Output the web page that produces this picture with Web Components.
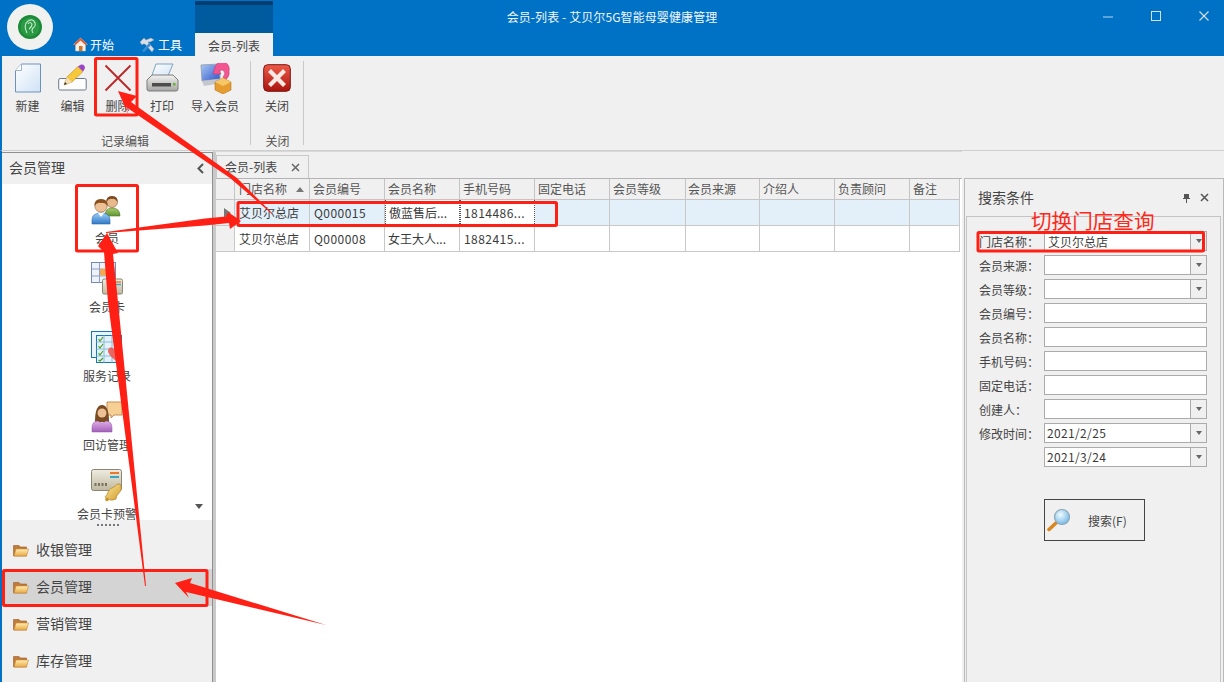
<!DOCTYPE html>
<html lang="zh"><head><meta charset="utf-8"><title>会员-列表</title>
<style>
html,body{margin:0;padding:0;background:#f0f0f0}
body{width:1224px;height:682px;overflow:hidden;position:relative;font:12px "Noto Sans CJK SC","Noto Sans",sans-serif;color:#444}
app-main{flex:1}
#shell{display:flex;flex-direction:column;width:1224px;height:682px}
#defs{position:absolute;width:0;height:0}
</style></head><body>
<svg id="defs" aria-hidden="true"><defs>
<linearGradient id="gPage" x1="0" y1="0" x2="1" y2="1"><stop offset="0" stop-color="#fff"/><stop offset="1" stop-color="#cfe2f5"/></linearGradient>
<linearGradient id="gBlue" x1="0" y1="0" x2="0" y2="1"><stop offset="0" stop-color="#9fd0f5"/><stop offset="1" stop-color="#2f78c8"/></linearGradient>
<linearGradient id="gGreen" x1="0" y1="0" x2="0" y2="1"><stop offset="0" stop-color="#a9cc6e"/><stop offset="1" stop-color="#5f9433"/></linearGradient>
<linearGradient id="gPurple" x1="0" y1="0" x2="0" y2="1"><stop offset="0" stop-color="#e2aee8"/><stop offset="1" stop-color="#a160b8"/></linearGradient>
<linearGradient id="gRed" x1="0" y1="0" x2="0" y2="1"><stop offset="0" stop-color="#ee5a48"/><stop offset="1" stop-color="#a8140e"/></linearGradient>
<linearGradient id="gGrey" x1="0" y1="0" x2="0" y2="1"><stop offset="0" stop-color="#f2f2f0"/><stop offset="1" stop-color="#a5a5a3"/></linearGradient>
<linearGradient id="gCard" x1="0" y1="0" x2="0" y2="1"><stop offset="0" stop-color="#efece0"/><stop offset="1" stop-color="#c0b9a0"/></linearGradient>
<linearGradient id="gGold" x1="0" y1="0" x2="1" y2="1"><stop offset="0" stop-color="#fdeb9a"/><stop offset="1" stop-color="#d19a2c"/></linearGradient>
<linearGradient id="gScreen" x1="0" y1="0" x2="1" y2="1"><stop offset="0" stop-color="#a9c8f5"/><stop offset="1" stop-color="#2f55c9"/></linearGradient>
</defs></svg>

<div id="shell">
<app-titlebar title-text="会员-列表 - 艾贝尔5G智能母婴健康管理"></app-titlebar>

<app-ribbon>
  <ribbon-group label="记录编辑" style="width:246px">
    <ribbon-btn label="新建" w="45"><svg width="28" height="30" viewBox="0 0 28 30"><path d="M7.5 1H26.5V29H1.5V7.500Z" fill="url(#gPage)" stroke="#6e93bb"/><path d="M7.500 1V7.500H1.500" fill="#fff" stroke="#9ab4cf"/></svg></ribbon-btn>
    <ribbon-btn label="编辑" w="45"><svg width="29" height="28" viewBox="0 0 29 28"><rect x=".7" y="14.500" width="27.500" height="11.500" rx="1.500" fill="#fdfdfd" stroke="#6b7a8a"/><path d="M6 21 9 13 20 2.500 25 7.500 14 18Z" fill="#f6c83a" stroke="#b98a1e" stroke-width=".6"/><path d="M20 2.500 22.500 .8 Q25 0 26.500 2 27.500 4 26.500 5.200L25 7.500Z" fill="#9a45c8"/><path d="M6 21 9 13 14 18Z" fill="#f3dcb4"/><path d="M6 21 7 18 9 20Z" fill="#333"/></svg></ribbon-btn>
    <ribbon-btn label="删除" w="45"><svg width="28" height="28" viewBox="0 0 28 28"><path d="M1.500 1.500 26.500 26.500M26.500 1.500 1.500 26.500" stroke="#b82a2a" stroke-width="1.900" fill="none"/></svg></ribbon-btn>
    <ribbon-btn label="打印" w="44"><svg width="33" height="30" viewBox="0 0 33 30"><path d="M10 1H27L21 15H5Z" fill="url(#gPage)" stroke="#7fa3c4"/><path d="M1 17 6 12H27L32 17V26Q32 28 30 28H3Q1 28 1 26Z" fill="url(#gGrey)" stroke="#7d7d7d"/><rect x="6" y="20" width="19" height="3.500" fill="#4d4d4d"/><rect x="27" y="20" width="2.500" height="2.500" fill="#66b32e"/></svg></ribbon-btn>
    <ribbon-btn label="导入会员" w="62"><svg width="33" height="31" viewBox="0 0 33 31"><path d="M2 2 21 1V16L3 18Z" fill="url(#gScreen)" stroke="#9aa6b6"/><path d="M3 18 21 16 23 20 5 23Z" fill="#c4c7cd"/><path d="M16 4A7 7 0 0 1 30 8Q31 14 26 17L24 14Q27 11 25 8 23 6 20 8L22 11 14 11Z" fill="#f2558f" stroke="#c12e6a" stroke-width=".5"/><path d="M16 19 24 15 32 19V27L24 31 16 27Z" fill="#e69c2f" stroke="#a86a16" stroke-width=".5"/><path d="M16 19 24 23 32 19 24 15Z" fill="#f6c766"/></svg></ribbon-btn>
  </ribbon-group>
  <ribbon-group label="关闭" style="width:53px">
    <ribbon-btn label="关闭" w="52"><svg width="28" height="28" viewBox="0 0 28 28"><rect x=".7" y=".7" width="26.600" height="26.600" rx="4" fill="url(#gRed)" stroke="#7e1410"/><path d="M8 5 14 11 20 5 23 8 17 14 23 20 20 23 14 17 8 23 5 20 11 14 5 8Z" fill="#fbe9e4"/></svg></ribbon-btn>
  </ribbon-group>
</app-ribbon>

<app-main>
  <nav-panel slot="nav" title-text="会员管理">
    <nav-tool label="会员"><svg width="32" height="30" viewBox="0 0 32 30"><circle cx="21" cy="7" r="5.500" fill="#e8b98c" stroke="#7a4a22" stroke-width=".5"/><path d="M15.500 7Q15 1 21 1 27 1 26.500 7 24 3 21 4 18 3 15.500 7Z" fill="#7b4a1f"/><path d="M14 21Q14 13 21 13 29 13 29 21Z" fill="url(#gGreen)" stroke="#4f7a2a" stroke-width=".6"/><circle cx="10" cy="11" r="6.200" fill="#eec096" stroke="#7a4a22" stroke-width=".5"/><path d="M3.500 11Q3 4 10 4 17 4 16.500 11 14 7 10 8 6 7 3.500 11Z" fill="#8a4f1c"/><path d="M1 29V25Q1 18 10 18 19 18 19 25V29Z" fill="url(#gBlue)" stroke="#2c66ad" stroke-width=".6"/><path d="M7 18 10 22 13 18Z" fill="#fff"/></svg></nav-tool>
    <nav-tool label="会员卡"><svg width="32" height="33" viewBox="0 0 32 33"><rect x=".5" y=".5" width="24" height="20" fill="#eef2fa" stroke="#7389b7"/><path d="M.5 7H24.500M.5 14H24.500M8.500 .5V20.500M16.500 .5V20.500" stroke="#8ea0c6" fill="none"/><rect x="9" y="7" width="7" height="6.500" fill="#f3a84f"/><rect x="11.500" y="17" width="20" height="15" rx="1.500" fill="url(#gCard)" stroke="#8b8572"/><path d="M24 20H30" stroke="#e9792c" stroke-width="1.400"/><path d="M24 22.500H30" stroke="#3ba7bf" stroke-width="1.400"/></svg></nav-tool>
    <nav-tool label="服务记录"><svg width="32" height="33" viewBox="0 0 32 33"><rect x=".5" y=".5" width="24" height="26" fill="#eaf3fb" stroke="#1478b4"/><rect x="5.500" y="4.500" width="25" height="27" fill="#e2f1fa" stroke="#1478b4"/><path d="M5.500 11H30.500M5.500 18H30.500M5.500 25H30.500M13 4.500V31.500M21 4.500V31.500" stroke="#8cbcd8" fill="none"/><path d="M7.500 8 9 10 12 6M7.500 15 9 17 12 13M7.500 22 9 24 12 20M7.500 29 9 30 12 27" stroke="#4c9a12" stroke-width="1.100" fill="none"/><path d="M25 30Q16 23 17 19 19 14 23 18 27 14 30 18 32 23 25 30Z" fill="#ec5a52" opacity=".9"/></svg></nav-tool>
    <nav-tool label="回访管理"><svg width="32" height="32" viewBox="0 0 32 32"><path d="M16 1H31V14H23L20 17V14H16Z" fill="#f5cf94" stroke="#c38d55"/><path d="M4 21Q4 4 11 4 18 4 18 21Z" fill="#7a4a20"/><circle cx="11" cy="12" r="4.500" fill="#eec096"/><path d="M1 31V27Q1 20 7 20 11 24 15 20 21 20 21 27V31Z" fill="url(#gPurple)" stroke="#8f53a6" stroke-width=".5"/></svg></nav-tool>
    <nav-tool label="会员卡预警"><svg width="32" height="33" viewBox="0 0 32 33"><rect x=".5" y=".5" width="30" height="21" rx="2" fill="url(#gCard)" stroke="#8b8572"/><path d="M19 4H28" stroke="#e9792c" stroke-width="2"/><path d="M19 8H28" stroke="#3ba7bf" stroke-width="2"/><path d="M3.500 14h2v3h-2zM7 14h2v3H7zM10.500 14h2v3h-2zM14 14h2v3h-2z" fill="#77735f"/><path d="M29 15Q32 20 28 24 25 27 25 30 19 33 14 28 16 26 17 23 19 19 23 18 26 14 29 15Z" fill="url(#gGold)" stroke="#a8771c" stroke-width=".6"/><circle cx="16" cy="30.500" r="1.800" fill="#c9922a"/></svg></nav-tool>
    <nav-cat slot="cats" label="收银管理"></nav-cat>
    <nav-cat slot="cats" label="会员管理" selected></nav-cat>
    <nav-cat slot="cats" label="营销管理"></nav-cat>
    <nav-cat slot="cats" label="库存管理"></nav-cat>
  </nav-panel>
  <doc-area slot="doc"></doc-area>
  <search-panel slot="side">
    <search-field label="门店名称：" value="艾贝尔总店" combo></search-field>
    <search-field label="会员来源：" combo></search-field>
    <search-field label="会员等级：" combo></search-field>
    <search-field label="会员编号："></search-field>
    <search-field label="会员名称："></search-field>
    <search-field label="手机号码："></search-field>
    <search-field label="固定电话："></search-field>
    <search-field label="创建人：" combo></search-field>
    <search-field label="修改时间：" value="2021/2/25" combo></search-field>
    <search-field label="" value="2021/3/24" combo></search-field>
  </search-panel>
</app-main>
</div>
<app-annotations></app-annotations>

<script>
const FONT='"Noto Sans CJK SC","Noto Sans",sans-serif';
function def(name,css,html,init){
  customElements.define(name,class extends HTMLElement{
    connectedCallback(){
      if(this.shadowRoot)return;
      const r=this.attachShadow({mode:'open'});
      const h=typeof html==='function'?html(this):html;
      r.innerHTML='<style>'+css+'</style>'+h;
      if(init)init(this,r);
    }
  });
}

def('app-titlebar',`
:host{display:grid;grid-template-columns:1fr auto 1fr;height:56px;background:#0072c6;color:#fff;flex:none;font-family:${FONT}}
.left{display:flex;align-items:flex-end;min-width:0}
.logo{width:46px;height:46px;border-radius:50%;background:#f1f1ef;margin:0 0 6px 7px;display:flex;align-items:center;justify-content:center;flex:none;align-self:flex-end}
.tabs{display:flex;align-items:flex-end;height:56px}
.tab{display:flex;align-items:center;gap:2px;height:23px;color:#fff;font-size:12px}
.t1{margin-left:20px;width:67px;gap:2px}
.t2{width:55px;gap:1px}
.t2 svg{margin-right:1px}
.ctx{width:78px;height:55px;margin-top:1px;display:flex;flex-direction:column;align-self:flex-end}
.ctx i{display:block;height:4px;background:#003d70}
.ctx b{display:block;height:28px;background:#005a9e}
.ctx span{display:flex;flex:1;align-items:center;justify-content:center;background:#f0f0f0;color:#444;font-size:12px;font-weight:400;padding-top:1px}
.title{font-size:12px;align-self:start;padding-top:8px;line-height:18px;color:#f2f7fb;letter-spacing:.1px}
.win{display:flex;justify-content:flex-end}
.win svg{display:block}
`,el=>`
<div class="left">
 <div class="logo"><svg width="24" height="24" viewBox="0 0 24 24"><circle cx="12" cy="12" r="12" fill="#1c8a38"/><circle cx="12" cy="12" r="9.500" fill="#2a9a45"/><path d="M9 18Q5 10 10 6 15 3 17 8 18 11 15 13 13 15 15 18M10 9Q12 6 14 9 14 12 11 14" fill="none" stroke="#c5e8ca" stroke-width="1.100"/></svg></div>
 <div class="tabs">
  <div class="tab t1"><svg width="15" height="15" viewBox="0 0 15 15"><path d="M.5 7.500 7.500 1 14.500 7.500 12.500 7.500V14H2.500V7.500Z" fill="#f6f0e6" stroke="#c9b9a4" stroke-width=".5"/><path d="M.5 7.500 7.500 1 14.500 7.500 12.500 8 7.500 3.500 2.500 8Z" fill="#e2572b"/><rect x="6" y="9" width="3.500" height="5" fill="#c9752c"/></svg><span>开始</span></div>
  <div class="tab t2"><svg width="17" height="16" viewBox="0 0 17 16" style="margin-left:-1px"><path d="M1 5 5 1 7 3 12 1 15 3 11 5 9 5 15 12 13 15 6 7 4 7 3 8Z" fill="#d7dde4" stroke="#8a98a6" stroke-width=".5"/><path d="M3 14 10 6 12 8 5 15Z" fill="#3c8ed4"/></svg><span>工具</span></div>
  <div class="ctx"><i></i><b></b><span>会员-列表</span></div>
 </div>
</div>
<div class="title">${el.getAttribute('title-text')}</div>
<div class="win">
 <svg width="164" height="32" viewBox="0 0 164 32"><path d="M43 17H53" stroke="#b8d5ee" stroke-width="1"/><rect x="91.500" y="11.500" width="9" height="9" fill="none" stroke="#d5dfe8" stroke-width="1"/><path d="M139.500 11.500 148.500 20.500M148.500 11.500 139.500 20.500" stroke="#d5dfe8" stroke-width="1.100"/></svg>
</div>`);

def('app-ribbon',`
:host{display:flex;height:94px;background:#f0f0f0;border-left:2px solid #0072c6;border-bottom:1px solid #cfcfcf;flex:none;box-sizing:content-box;padding-left:3px}
`,`<slot></slot>`);

def('ribbon-group',`
:host{display:flex;flex-direction:column;height:94px;box-sizing:border-box;position:relative;flex:none}
.row{display:flex;height:78px}
.lab{height:16px;line-height:14px;text-align:center;color:#555;font-size:12px;width:100%}
:host([label="记录编辑"]) .lab{width:240px}
.sep{position:absolute;right:0;top:5px;height:84px;width:1px;background:#c9c9c9}
`,el=>`<div class="row"><slot></slot></div><div class="lab">${el.getAttribute('label')}</div><div class="sep"></div>`);

def('ribbon-btn',`
:host{display:flex;flex-direction:column;align-items:center;flex:none;font-size:12px;color:#444}
.ic{height:38px;display:flex;align-items:center;justify-content:center;margin-top:3px}
.lb{line-height:18px;white-space:nowrap}
::slotted(svg){display:block}
`,el=>{el.style.width=el.getAttribute('w')+'px';return `<div class="ic" part="ic"><slot></slot></div><div class="lb">${el.getAttribute('label')}</div>`});

def('app-main',`
:host{display:flex;min-height:0;flex:1;background:#f0f0f0;overflow:hidden}
`,`<slot name="nav"></slot><slot name="doc"></slot><slot name="side"></slot>`);

def('nav-panel',`
:host{display:flex;flex-direction:column;width:213px;flex:none;border-left:2px solid #0072c6;box-sizing:border-box;position:relative;background:#f0f0f0}
.wrap{margin-top:1px;flex:1;display:flex;flex-direction:column;border-top:1px solid #8f8f8f;border-right:1px solid #8f8f8f;min-height:0}
.hd{height:31px;flex:none;display:flex;align-items:center;justify-content:space-between;padding:0 7px;font-size:14px;color:#444}
.hd span{margin-bottom:4px}
.list{height:336px;flex:none;background:#fff;overflow:hidden;padding-top:6px;box-sizing:border-box;position:relative}
.arrow{position:absolute;right:9px;top:320px;width:0;height:0;border:4.500px solid transparent;border-top:5px solid #555;border-bottom:0}
.grip{height:12px;flex:none;display:flex;justify-content:center;align-items:flex-start;gap:1px;padding-top:4px;box-sizing:border-box}
.grip i{display:block;width:2px;height:2px;background:#777;margin-left:1px}
.cats{display:flex;flex-direction:column}
`,el=>`<div class="wrap"><div class="hd"><span>${el.getAttribute('title-text')}</span><svg width="9" height="11" viewBox="0 0 9 11"><path d="M7 1 2.500 5.500 7 10" fill="none" stroke="#555" stroke-width="2"/></svg></div>
<div class="list"><slot></slot><div class="arrow"></div></div>
<div class="grip"><i></i><i></i><i></i><i></i><i></i><i></i></div>
<div class="cats"><slot name="cats"></slot></div></div>`);

def('nav-tool',`
:host{display:flex;flex-direction:column;align-items:center;height:69px;font-size:12px;color:#444}
.ic{height:39px;display:flex;align-items:center;justify-content:center}
.lb{line-height:17px;white-space:nowrap}
::slotted(svg){display:block}
`,el=>`<div class="ic"><slot></slot></div><div class="lb">${el.getAttribute('label')}</div>`);

def('nav-cat',`
:host{display:flex;align-items:center;height:37px;font-size:14px;color:#444;padding-left:11px;gap:7px}
:host([selected]){background:#d4d4d4}
svg{display:block;flex:none;margin-bottom:1px}
span{margin-bottom:4px}
`,el=>`<svg width="16" height="13" viewBox="0 0 16 13"><defs><linearGradient id="f" x1="0" y1="0" x2="0" y2="1"><stop offset="0" stop-color="#fdeeb0"/><stop offset="1" stop-color="#eaa945"/></linearGradient></defs><path d="M.5 12V1.500H6L7.500 3H13.500V12Z" fill="#c07b3c" stroke="#9a5c26" stroke-width=".6"/><path d="M1 12 3 5H15.500L13.500 12Z" fill="url(#f)" stroke="#c98a35" stroke-width=".6"/></svg><span>${el.getAttribute('label')}</span>`);

const COLS=[19,75,75,75,75,75,76,74,75,75,50];
const HEAD=['门店名称','会员编号','会员名称','手机号码','固定电话','会员等级','会员来源','介绍人','负责顾问','备注'];
const ROWS=[['艾贝尔总店','Q000015','傲蓝售后...','1814486...','','','','','',''],['艾贝尔总店','Q000008','女王大人...','1882415...','','','','','','']];
def('doc-area',`
:host{display:flex;flex-direction:column;width:749px;flex:none;box-sizing:border-box;border-left:3px solid #c9c9c9;font-size:12px;color:#444;border-top:1px solid #d8d8d8}
.strip{height:26px;flex:none;display:flex;align-items:flex-end}
.tab{width:93px;height:23px;box-sizing:border-box;border:1px solid #c8c8c8;border-bottom:0;display:flex;align-items:center;justify-content:space-between;padding:0 8px;background:#f0f0f0}
.tab span{margin-bottom:2px}
.grid{flex:1;background:#fff;border-top:1px solid #b4b4b4;display:grid;grid-template-columns:${COLS.join('px ')}px;grid-auto-rows:min-content;align-content:start}
.c{box-sizing:border-box;border-right:1px solid #c8c8c8;border-bottom:1px solid #c8c8c8;padding-left:3px;white-space:nowrap;overflow:hidden;display:flex;align-items:center;color:#3b3b3b}
.first{padding-left:4px}
.h{height:21px;background:#f0f0f0;position:relative;color:#555;padding-bottom:2px;border-color:#c4c4c4}
.h.src{padding-left:2px}
.r{height:26px}
.rh{background:#f0f0f0;padding:0}
.sel{background:#e3f0fa}
.focus{background:#fff;border-right:1px dotted #555;border-left:1px dotted #555;padding-left:3px}
.sort{position:absolute;right:5px;top:8px;width:0;height:0;border:4px solid transparent;border-bottom:5px solid #777;border-top:0}
.tri{display:block;width:0;height:0;border:5.500px solid transparent;border-left:7px solid #777;border-right:0;margin-left:8px}
.num{letter-spacing:.45px;padding-left:4px}
.focus.num{padding-left:3px}
`,()=>{
 let g='<div class="c h"></div>';
 HEAD.forEach((t,i)=>g+=`<div class="c h${i==0?' first':''}${i==6?' src':''}">${t}${i==0?'<i class="sort"></i>':''}</div>`);
 ROWS.forEach((row,ri)=>{
  g+=`<div class="c r rh">${ri==0?'<i class="tri"></i>':''}</div>`;
  row.forEach((t,i)=>{
   let cl='c r';
   if(ri==0)cl+=(i==2||i==3)?' focus':' sel';
   if(i==0)cl+=' first';
   if(i==1||i==3)cl+=' num';
   g+=`<div class="${cl}">${t}</div>`;
  });
 });
 return `<div class="strip"><div class="tab"><span>会员-列表</span><svg width="9" height="9" viewBox="0 0 9 9"><path d="M1 1 8 8M8 1 1 8" stroke="#666" stroke-width="1.500"/></svg></div></div><div class="grid">${g}</div>`;
});

def('search-panel',`
:host{display:flex;flex-direction:column;width:260px;flex:none;margin:27px 0 0 2px;box-sizing:border-box;border:1px solid #b9b9b9;border-bottom:0;padding:0 2px 0 1px}
.hd{height:37px;flex:none;display:flex;align-items:center;padding:0 12px 0 12px;font-size:14px;color:#444}
.hd span{flex:1;margin-bottom:2px}
.hd svg{display:block;margin-left:9px}
.box{flex:1;border:1px solid #c4c4c4;border-bottom:0;padding:14px 0 0 13px;display:flex;flex-direction:column;gap:4px}
.btn{margin:28px 0 0 64px;width:101px;height:42px;box-sizing:border-box;border:1px solid #444;display:flex;align-items:center;font-size:12px;color:#444;padding-left:2px}
.btn span{margin-left:15px}
`,`<div class="hd"><span>搜索条件</span><svg width="9" height="10" viewBox="0 0 9 10"><path d="M2 1H7V5H8V6H5V10H4V6H1V5H2Z" fill="#555"/></svg><svg width="9" height="9" viewBox="0 0 9 9"><path d="M1 1 8 8M8 1 1 8" stroke="#555" stroke-width="1.500"/></svg></div>
<div class="box"><slot></slot>
<div class="btn"><svg width="26" height="24" viewBox="0 0 26 24"><defs><radialGradient id="l" cx=".4" cy=".35" r=".7"><stop offset="0" stop-color="#f2fbff"/><stop offset="1" stop-color="#6db6e6"/></radialGradient></defs><path d="M2 21.500 9 15" stroke="#d8861e" stroke-width="3.500" stroke-linecap="round"/><circle cx="15" cy="9" r="7.500" fill="url(#l)" stroke="#8fa6b5" stroke-width="1.200"/></svg><span>搜索(F)</span></div></div>`);

def('search-field',`
:host{display:flex;height:20px;font-size:12px;color:#444;flex:none;align-items:center;margin-left:-1px}
.l{width:65px;flex:none;white-space:nowrap}
.f{width:163px;height:20px;box-sizing:border-box;border:1px solid #ababab;background:#fff;display:flex;align-items:center}
.v{flex:1;padding-left:3px;color:#3b3b3b;white-space:nowrap}
.b{width:15px;height:100%;border-left:1px solid #ababab;background:#f0f0f0;display:flex;align-items:center;justify-content:center;flex:none}
.b i{width:0;height:0;border:3.500px solid transparent;border-top:4px solid #666;border-bottom:0}
.n{letter-spacing:.35px;padding-left:2px;padding-bottom:1px}
`,el=>{
 const v=el.getAttribute('value')||'';
 return `<div class="l">${el.getAttribute('label')||''}</div><div class="f"><div class="v${/^\d/.test(v)?' n':''}">${v}</div>${el.hasAttribute('combo')?'<div class="b"><i></i></div>':''}</div>`;
});

def('app-annotations',`
:host{position:absolute;left:0;top:0;width:1224px;height:682px;pointer-events:none;display:block}
svg{position:absolute;left:0;top:0}
.t{position:absolute;left:1031px;top:208px;font:20.600px/24px ${FONT};color:#fd2a1c;white-space:nowrap}
`,`<svg width="1224" height="682" viewBox="0 0 1224 682">
<g fill="none" stroke="#fe2014" stroke-width="3" stroke-linejoin="round">
<rect x="95.500" y="58.500" width="41.500" height="56.500" rx="1"/>
<rect x="76.500" y="185.500" width="61" height="65.500" rx="1"/>
<rect x="238" y="202.500" width="318.500" height="23" rx="1"/>
<rect x="3.500" y="570.500" width="203.500" height="35" rx="1"/>
<rect x="978" y="232.500" width="225.500" height="18.500" rx="1"/>
</g>
<g fill="#fe2014">
<polygon points="118,91 137,96 131,102 237,178 272,213 272,214 230,178 126,107 129,116"/>
<polygon points="107,233 118,253 113,254 118,302 146,586 145,586 108,302 104,252 98,246"/>
<polygon points="106,232 205,218.500 226,216.500 228,212 241,221 230,229 229,223 205,225.500 106,233"/>
<polygon points="175,583 192,578 190,583 326,625 186,592 189,598"/>
</g></svg><div class="t">切换门店查询</div>`);
</script>
</body></html>
